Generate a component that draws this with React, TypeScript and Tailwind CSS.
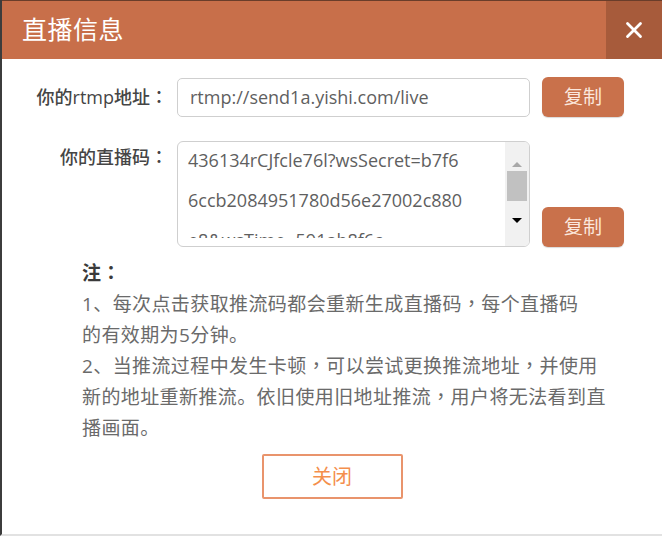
import { X } from "lucide-react";

const font = { fontFamily: '"Open Sans", "Noto Sans CJK SC", sans-serif' };
const tc = { fontFamily: '"Noto Sans CJK TC", sans-serif' };

const codeLines = [
    "436134rCJfcle76l?wsSecret=b7f6",
    "6ccb2084951780d56e27002c880",
    "e8&wsTime=591ab8f6c",
];

const notes = [
    "1、每次点击获取推流码都会重新生成直播码，每个直播码",
    "的有效期为5分钟。",
    "2、当推流过程中发生卡顿，可以尝试更换推流地址，并使用",
    "新的地址重新推流。依旧使用旧地址推流，用户将无法看到直",
    "播画面。",
];

// full-width commas / colons centred like the original font
function Punct({ text }: { text: string }) {
    const parts = text.split(/([，：])/);
    return (
        <>
            {parts.map((p, i) =>
                p === "，" || p === "：" ? (
                    <span key={i} style={tc} className="leading-[0]">{p}</span>
                ) : (
                    <span key={i}>{p}</span>
                )
            )}
        </>
    );
}

function CopyButton({ className }: { className?: string }) {
    return (
        <button
            className={`w-[82px] h-[40px] rounded-[6px] bg-[#c9714b] text-[#fbe7dd] text-[19px] flex items-center justify-center shadow-[0_1px_1px_rgba(0,0,0,0.15)] ${className ?? ""}`}>
            复制
        </button>
    );
}

export default function App() {
    return (
        <div
            style={font}
            className="w-[662px] h-[536px] bg-white border-l-2 border-l-[#3c3c3c] border-b-2 border-b-[#e2e2e2] flex flex-col overflow-hidden">
            {/* header */}
            <div className="h-[59px] flex border-t border-t-[#6a3d2a] bg-[#c86f4a] shrink-0">
                <div className="flex-1 pl-[20px] flex items-center text-white text-[25px] tracking-[0.5px]">
                    直播信息
                </div>
                <div className="w-[56px] bg-[#a75b3b] flex items-center justify-center">
                    <X className="w-[26px] h-[26px] text-white" strokeWidth={2.6} />
                </div>
            </div>

            {/* rtmp */}
            <div className="flex items-center mt-[18px]">
                <div className="w-[166px] text-right text-[18px] leading-[28px] font-medium text-[#454545]">
                    <Punct text="你的rtmp地址：" />
                </div>
                <div className="ml-[9px] w-[353px] h-[39px] rounded-[5px] border border-[#cfcfcf] flex items-center pl-[12px] text-[18px] text-[#5f5f5f]">
                    rtmp://send1a.yishi.com/live
                </div>
                <CopyButton className="ml-[12px]" />
            </div>

            {/* code */}
            <div className="flex items-start mt-[24px]">
                <div className="w-[166px] text-right text-[18px] font-medium leading-[32px] text-[#454545]">
                    <Punct text="你的直播码：" />
                </div>
                <div className="ml-[9px] w-[353px] h-[106px] rounded-[6px] border border-[#cfcfcf] flex overflow-hidden">
                    <div className="flex-1 h-[96px] overflow-hidden pl-[10px]">
                        <div className="-mt-[2px] text-[18px] leading-[40px] text-[#5f5f5f] whitespace-nowrap">
                            {codeLines.map((l) => (
                                <div key={l}>{l}</div>
                            ))}
                        </div>
                    </div>
                    {/* scrollbar */}
                    <div className="w-[24px] bg-[#f1f1f1] flex flex-col items-center">
                        <div className="mt-[20px] w-0 h-0 border-x-[5px] border-x-transparent border-b-[5px] border-b-[#a8a8a8]" />
                        <div className="mt-[4px] w-[20px] h-[30px] bg-[#c1c1c1]" />
                        <div className="mt-[17px] w-0 h-0 border-x-[5px] border-x-transparent border-t-[5px] border-t-black" />
                    </div>
                </div>
                <CopyButton className="ml-[12px] self-end" />
            </div>

            {/* notes */}
            <div className="ml-[80px] mt-[11px] text-[19px] tracking-[0.4px] leading-[31px] text-[#6a6a6a]">
                <div className="font-bold text-[#3a3a3a]">
                    <Punct text="注：" />
                </div>
                {notes.map((n) => (
                    <div key={n}>
                        <Punct text={n} />
                    </div>
                ))}
            </div>

            <button className="mt-[10px] mx-auto w-[141px] h-[45px] border-2 border-[#e9946c] rounded-[2px] text-[#f48f4d] text-[20px] flex items-center justify-center">
                关闭
            </button>
        </div>
    );
}
